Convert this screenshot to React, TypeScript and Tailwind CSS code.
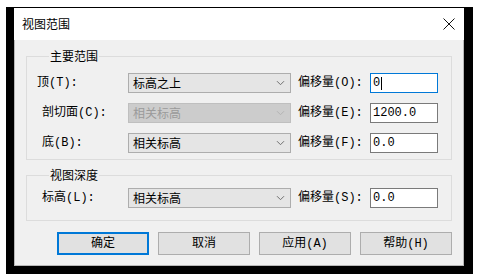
import React from "react";

const mono = "font-['Liberation_Mono','Noto_Sans_CJK_SC',monospace]";
const cjk = "font-['Noto_Sans_CJK_SC','Liberation_Sans',sans-serif]";

function Chevron({ disabled }: { disabled?: boolean }) {
  return (
    <svg width="9" height="6" viewBox="0 0 9 6" className="shrink-0">
      <path d="M1 1.2 L4.5 4.7 L8 1.2" fill="none" stroke={disabled ? "#b4b4b4" : "#707070"} strokeWidth="1" />
    </svg>
  );
}

function Combo({ value, disabled }: { value: string; disabled?: boolean }) {
  return (
    <div
      className={
        disabled
          ? "flex h-[20px] w-[163px] items-center justify-between border border-[#bfbfbf] bg-[#cccccc] pl-[4px] pr-[5px] text-[#9a9a9a]"
          : "flex h-[20px] w-[163px] items-center justify-between border border-[#adadad] bg-[#e5e5e5] pl-[4px] pr-[5px] text-black"
      }
    >
      <span className={`${cjk} text-[12px] leading-none`}>{value}</span>
      <Chevron disabled={disabled} />
    </div>
  );
}

function Field({ value, focused }: { value: string; focused?: boolean }) {
  return (
    <div
      className={
        focused
          ? "flex h-[20px] w-[68px] items-center border border-[#0078d7] bg-white pl-[2px]"
          : "flex h-[20px] w-[68px] items-center border border-[#7a7a7a] bg-white pl-[2px]"
      }
    >
      <span className={`${mono} text-[12px] leading-none text-black`}>{value}</span>
      {focused && <span className="ml-[1px] h-[13px] w-px bg-black" />}
    </div>
  );
}

function Row({
  label,
  value,
  offsetLabel,
  offset,
  disabled,
  focused,
  shift,
}: {
  label: string;
  value: string;
  offsetLabel: string;
  offset: string;
  disabled?: boolean;
  focused?: boolean;
  shift?: boolean;
}) {
  return (
    <div className="flex h-[20px] items-center">
      <div
        className={
          shift
            ? `${mono} -ml-[5px] w-[91px] text-[12px] leading-none text-black`
            : `${mono} w-[86px] text-[12px] leading-none text-black`
        }
      >
        {label}
      </div>
      <Combo value={value} disabled={disabled} />
      <div className={`${mono} w-[79px] pl-[7px] text-[12px] leading-none text-black`}>{offsetLabel}</div>
      <Field value={offset} focused={focused} />
    </div>
  );
}

function Btn({ label, primary }: { label: string; primary?: boolean }) {
  return (
    <div
      className={
        primary
          ? `${mono} flex h-[23px] w-[92px] items-center justify-center border-2 border-[#0078d7] bg-[#e1e1e1] text-[12px] text-black`
          : `${mono} flex h-[23px] w-[92px] items-center justify-center border border-[#adadad] bg-[#e1e1e1] text-[12px] text-black`
      }
    >
      {label}
    </div>
  );
}

export default function App() {
  return (
    <div className="h-[278px] w-[479px] bg-white pl-[6px] pt-[7px]">
      <div className="h-[267px] w-[467px] bg-black pl-[8px] pt-[1px]">
        <div className="flex h-[258px] w-[450px] flex-col bg-[#f0f0f0]">
          <div className="flex h-[32px] items-center justify-between bg-white pl-[8px] pr-[9px]">
            <span className={`${cjk} text-[12px] text-black`}>视图范围</span>
            <svg width="12" height="12" viewBox="0 0 12 12">
              <path d="M0.5 0.5 L11.5 11.5 M11.5 0.5 L0.5 11.5" stroke="#111" strokeWidth="1" />
            </svg>
          </div>
          <div className="flex flex-1 flex-col border-x border-b border-[#b8b8b8] px-[11px] pb-[10px]">
            <fieldset className="mt-[8px] border border-[#dcdcdc] pb-[6px] pl-[15px]">
              <legend className={`${cjk} ml-[7px] px-[1px] text-[12px] leading-[16px] text-black`}>主要范围</legend>
              <div className="flex flex-col gap-[10px] pt-[9px]">
                <Row label="顶(T):" value="标高之上" offsetLabel="偏移量(O):" offset="0" focused shift />
                <Row label="剖切面(C):" value="相关标高" offsetLabel="偏移量(E):" offset="1200.0" disabled />
                <Row label="底(B):" value="相关标高" offsetLabel="偏移量(F):" offset="0.0" />
              </div>
            </fieldset>
            <fieldset className="mt-[7px] border border-[#dcdcdc] pb-[12px] pl-[15px]">
              <legend className={`${cjk} ml-[7px] px-[1px] text-[12px] leading-[16px] text-black`}>视图深度</legend>
              <div className="pt-[5px]">
                <Row label="标高(L):" value="相关标高" offsetLabel="偏移量(S):" offset="0.0" />
              </div>
            </fieldset>
            <div className="mt-auto flex justify-end gap-[9px]">
              <Btn label="确定" primary />
              <Btn label="取消" />
              <Btn label="应用(A)" />
              <Btn label="帮助(H)" />
            </div>
          </div>
        </div>
      </div>
    </div>
  );
}
